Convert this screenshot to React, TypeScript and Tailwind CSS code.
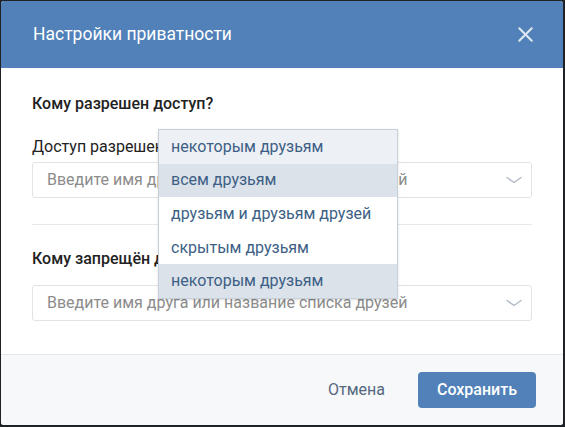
import { X } from "lucide-react";

const options = [
  { label: "некоторым друзьям", bg: "bg-[#edf0f5]" },
  { label: "всем друзьям", bg: "bg-[#dbe2ea]" },
  { label: "друзьям и друзьям друзей", bg: "bg-white" },
  { label: "скрытым друзьям", bg: "bg-white" },
  { label: "некоторым друзьям", bg: "bg-[#dbe2ea]" },
];

function FriendInput() {
  return (
    <div className="flex h-[36px] items-center justify-between rounded-[3px] border border-[#e1e3e6] bg-white pl-[14px] pr-[9px]">
      <span className="text-[16px] text-[#8c8c8c]">Введите имя друга или название списка друзей</span>
      <svg width="16" height="8" viewBox="0 0 16 8" fill="none" className="text-[#b3bcc7]">
        <path d="M1 1.5 L8 6.5 L15 1.5" stroke="currentColor" strokeWidth="1.5" strokeLinecap="round" strokeLinejoin="round" />
      </svg>
    </div>
  );
}

export default function App() {
  return (
    <div
      className="h-[427px] w-[565px] bg-[#1e2126] pl-[1px] pt-[1px]"
      style={{ fontFamily: "Roboto, 'Noto Sans', sans-serif" }}
    >
      <div className="relative flex h-[424px] w-[562px] flex-col overflow-hidden rounded-[3px] bg-white">
        <div className="flex h-[67px] shrink-0 items-center justify-between bg-[#5181b8] pl-[32px] pr-[25px]">
          <h1 className="text-[17.5px] text-white">Настройки приватности</h1>
          <X className="h-[25px] w-[25px] text-[#dfe7f1]" strokeWidth={2} />
        </div>

        <div className="flex flex-1 flex-col pl-[31px] pr-[31px] pt-[26px]">
          <p className="text-[16px] leading-[20px] font-medium text-[#222]">Кому разрешен доступ?</p>
          <p className="mt-[23px] mb-[5px] text-[16px] leading-[20px] text-[#222]">Доступ разрешен:</p>
          <FriendInput />
          <div className="mt-[26px] h-px bg-[#e7e8ec]" />
          <p className="mt-[24px] mb-[16px] text-[16px] leading-[20px] font-medium text-[#222]">Кому запрещён доступ?</p>
          <FriendInput />
        </div>

        <div className="flex h-[71px] shrink-0 items-center justify-end gap-[13px] border-t border-[#e7e8ec] bg-[#f7f8fa] pr-[27px]">
          <button className="h-[36px] px-[20px] text-[16px] text-[#55677d]">Отмена</button>
          <button className="h-[36px] w-[118px] rounded-[4px] bg-[#5181b8] text-[16px] font-medium text-white">
            Сохранить
          </button>
        </div>

        <ul className="absolute left-[157px] top-[128px] w-[240px] border border-[#c5d0db] bg-white shadow-sm">
          {options.map((o, i) => (
            <li
              key={i}
              className={`flex h-[33.6px] items-center pl-[12px] text-[16px] text-[#3d5f85] ${o.bg}`}
            >
              {o.label}
            </li>
          ))}
        </ul>
      </div>
    </div>
  );
}
